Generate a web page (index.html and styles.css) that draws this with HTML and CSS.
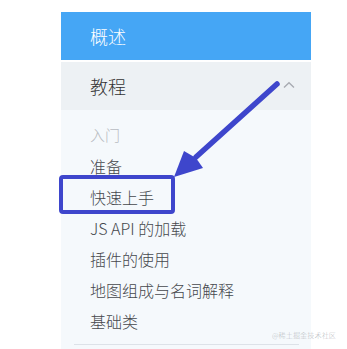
FILE: index.html
```html
<!DOCTYPE html>
<html lang="zh">
<head>
<meta charset="utf-8">
<link rel="stylesheet" href="styles.css">
</head>
<body>
<div class="page">
  <nav class="menu">
    <div class="menu-item active">概述</div>
    <div class="submenu-title">
      <span>教程</span>
      <svg class="chevron" width="12" height="8" viewBox="0 0 12 8"><path d="M1 6.5 L6 1.8 L11 6.5" fill="none" stroke="#a8abb2" stroke-width="1.4"/></svg>
    </div>
    <div class="submenu">
      <div class="group-title">入门</div>
      <div class="sub-item">准备</div>
      <div class="sub-item">快速上手</div>
      <div class="sub-item">JS API 的加载</div>
      <div class="sub-item">插件的使用</div>
      <div class="sub-item">地图组成与名词解释</div>
      <div class="sub-item">基础类</div>
      <div class="divider"></div>
    </div>
  </nav>
  <svg class="annotation" width="347" height="349" viewBox="0 0 347 349">
    <rect x="61" y="177" width="112" height="35" rx="2" fill="none" stroke="#3e46cc" stroke-width="4"/>
    <line x1="277" y1="84" x2="196" y2="157" stroke="#3e46cc" stroke-width="5.5" stroke-linecap="round"/>
    <polygon points="174,177 184,151 196,158 203,168" fill="#3e46cc"/>
  </svg>
  <div class="watermark">@稀土掘金技术社区</div>
</div>
</body>
</html>
```
FILE: styles.css
```css
html, body {
  margin: 0;
  padding: 0;
  background: #ffffff;
}
body {
  font-family: "Noto Sans CJK SC", "Noto Sans", sans-serif;
  font-weight: 300;
}
.page {
  position: relative;
  width: 347px;
  height: 349px;
  overflow: hidden;
}
.menu {
  margin-left: 61px;
  padding-top: 12px;
  width: 250px;
}
.menu-item {
  height: 48px;
  line-height: 48px;
  padding-left: 29px;
  font-size: 18px;
}
.menu-item.active {
  background: #45a6f5;
  color: #ffffff;
}
.submenu-title {
  margin-top: 2px;
  height: 48px;
  padding-left: 29px;
  padding-right: 16px;
  background: #edf1f4;
  color: #333333;
  font-size: 18px;
  display: flex;
  align-items: center;
  justify-content: space-between;
}
.chevron {
  margin-top: -2px;
}
.submenu {
  background: #f5f9fc;
  padding-top: 10px;
  padding-bottom: 10px;
}
.group-title {
  height: 30px;
  line-height: 30px;
  padding-left: 29px;
  font-size: 15px;
  color: #b8bcc2;
  margin-bottom: 1px;
}
.sub-item {
  height: 31px;
  line-height: 31px;
  padding-left: 29px;
  font-size: 16px;
  color: #45484d;
}
.divider {
  margin: 7px 12px 0 13px;
  height: 1px;
  background: #dde2e8;
}
.annotation {
  position: absolute;
  left: 0;
  top: 0;
}
.watermark {
  position: absolute;
  left: 272px;
  top: 330px;
  font-size: 7.2px;
  line-height: 10px;
  color: rgba(140, 145, 150, 0.6);
  white-space: nowrap;
}
```
